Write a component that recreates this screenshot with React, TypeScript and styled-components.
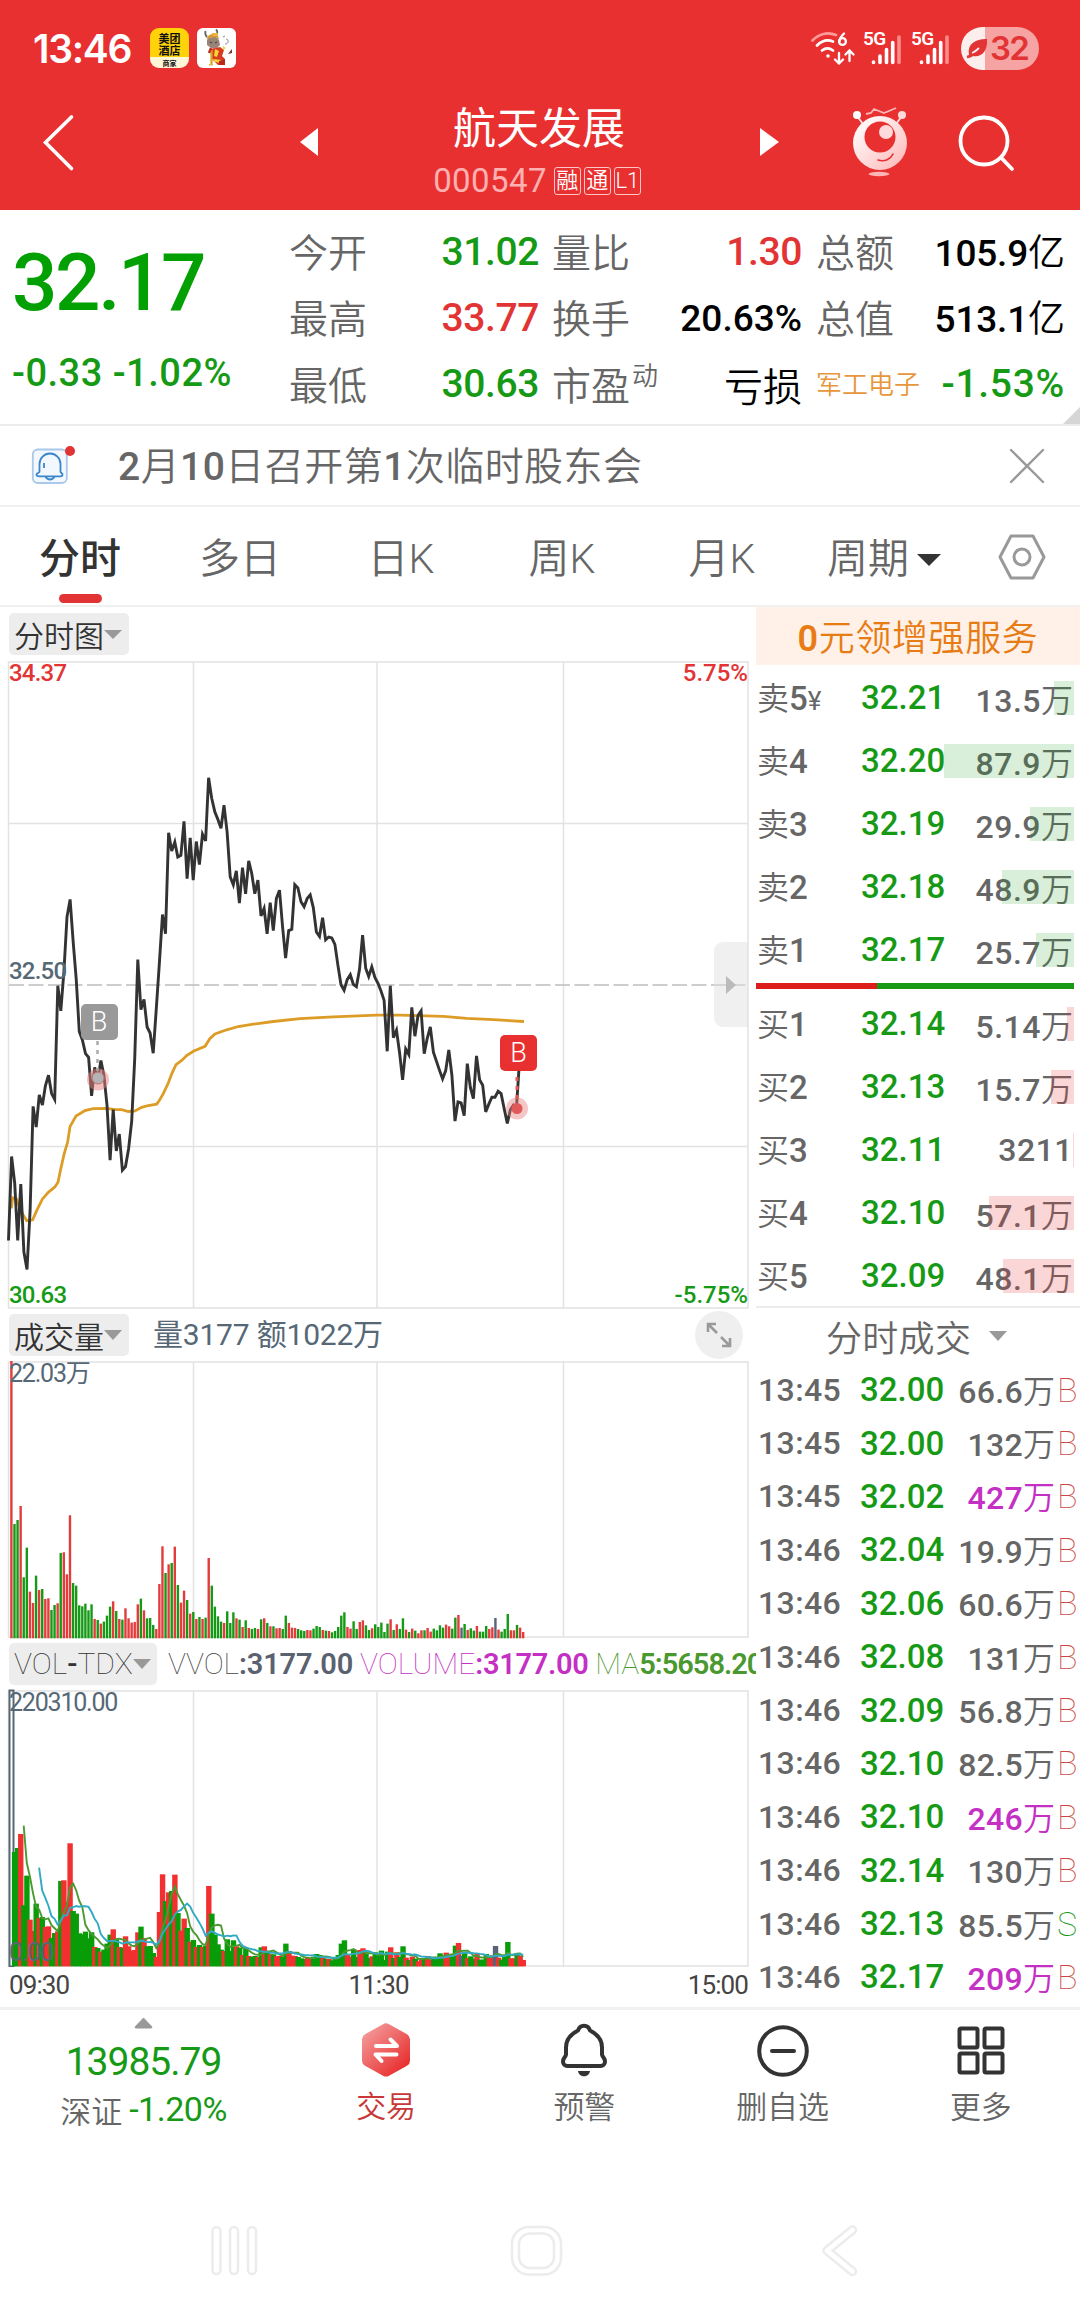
import React from "react";
import styled, { createGlobalStyle } from "styled-components";

const RED = "#e83030";
const UP = "#e23434";
const DOWN = "#169a16";
const SLATE = "#566876";
const GREY = "#666666";
const MAGENTA = "#c42fc4";
const LINE = "#e2e2e2";

const GlobalStyle = createGlobalStyle`
  * { box-sizing: border-box; }
  body {
    margin: 0;
    background: #fff;
    font-family: Roboto, "Noto Sans CJK SC", sans-serif;
    -webkit-font-smoothing: antialiased;
  }
`;

/* ---------- shared pieces ---------- */

const Screen = styled.div`
  width: 1080px;
  height: 2316px;
  overflow: hidden;
  display: flex;
  flex-direction: column;
  background: #fff;
`;

const Num = styled.span<{ $size: number; $color?: string; $weight?: number; $gap?: number }>`
  font-size: ${(p) => p.$size}px;
  color: ${(p) => p.$color ?? "inherit"};
  font-weight: ${(p) => p.$weight ?? 500};
  letter-spacing: ${(p) => p.$gap ?? 0}px;
  line-height: 1;
  white-space: pre;
`;

const Han = styled.span<{ $size: number; $color?: string; $weight?: number; $gap?: number }>`
  font-family: "Noto Sans CJK SC", sans-serif;
  font-size: ${(p) => p.$size}px;
  color: ${(p) => p.$color ?? "inherit"};
  font-weight: ${(p) => p.$weight ?? 350};
  letter-spacing: ${(p) => p.$gap ?? 0}px;
  line-height: 1;
  white-space: pre;
`;

const Unit = styled.span`
  font-family: "Noto Sans CJK SC", sans-serif;
  font-weight: 350;
  letter-spacing: 0;
`;

/* Digits keep the medium weight, a trailing unit such as 万 or 亿 is set lighter. */
const Amount = ({ children }: { children: string }) => {
  const unit = /[万亿]$/.test(children) ? children.slice(-1) : "";
  return (
    <>
      {unit ? children.slice(0, -1) : children}
      {unit && <Unit>{unit}</Unit>}
    </>
  );
};

/* ---------- header ---------- */

const Header = styled.header`
  height: 210px;
  background: ${RED};
  color: #fff;
  display: flex;
  flex-direction: column;
`;

const StatusBar = styled.div`
  height: 96px;
  padding: 0 41px 0 33px;
  display: flex;
  justify-content: space-between;
  align-items: center;
`;

const StatusGroup = styled.div`
  display: flex;
  align-items: center;
`;

const Clock = styled.span`
  font-family: Inter, sans-serif;
  font-size: 39px;
  font-weight: 600;
  letter-spacing: -1.3px;
  line-height: 1;
  width: 117px;
`;

const HotelBadge = styled.div`
  width: 39px;
  height: 40px;
  margin-right: 8px;
  border-radius: 9px;
  overflow: hidden;
  background: linear-gradient(#ffd20a 0 72%, #fff6d8 72%);
  color: #111;
  display: flex;
  flex-direction: column;
  align-items: center;
  font-family: "Noto Sans CJK SC", sans-serif;
  font-weight: 700;
  font-size: 11px;
  line-height: 12px;
  padding-top: 4px;
`;

const HotelFoot = styled.span`
  font-size: 7px;
  line-height: 10px;
  margin-top: 2px;
`;

const MascotBadge = styled.div`
  width: 39px;
  height: 40px;
  border-radius: 6px;
  background: #fff;
`;

const SignalWrap = styled.div`
  display: flex;
  gap: 9px;
  margin: 0 11px 0 8px;
`;

const Battery = styled.div`
  width: 78px;
  height: 43px;
  border-radius: 22px;
  background: linear-gradient(90deg, #fdeeee 0 24px, #f6a3a3 24px);
  color: ${UP};
  display: flex;
  align-items: center;
  padding-left: 5px;
  font-family: Inter, sans-serif;
  font-weight: 600;
  font-size: 33px;
  letter-spacing: -1.8px;
`;

const TitleBar = styled.div`
  flex: 1;
  display: grid;
  grid-template-columns: 300px 18px 442px 19px 73px 55px 51px 60px;
  align-items: start;
`;

const Cell = styled.div<{ $top: number; $left?: number }>`
  padding-top: ${(p) => p.$top}px;
  padding-left: ${(p) => p.$left ?? 0}px;
  line-height: 0;
`;

const TitleBlock = styled.div`
  display: flex;
  flex-direction: column;
  align-items: center;
  padding-top: 8px;
`;

const CodeRow = styled.div`
  margin-top: 17px;
  display: flex;
  align-items: center;
  gap: 3px;
  padding-right: 4px;
`;

const Code = styled.span`
  font-size: 33px;
  line-height: 1;
  color: #ffb0b0;
  letter-spacing: 0.4px;
  margin-right: 4px;
`;

const Tag = styled.span`
  width: 27px;
  height: 28px;
  border: 1px solid #ffc4c4;
  border-radius: 3px;
  display: flex;
  align-items: center;
  justify-content: center;
  font-family: Roboto, "Noto Sans CJK SC", sans-serif;
  font-size: 22px;
  font-weight: 350;
  line-height: 1;
`;

/* ---------- quote ---------- */

const Quote = styled.section`
  position: relative;
  height: 216px;
  border-bottom: 2px solid #ececec;
  display: flex;
`;

const PriceBlock = styled.div`
  width: 289px;
  padding: 33px 0 0 12px;
  display: flex;
  flex-direction: column;
  gap: 31px;
`;

const StatGrid = styled.div`
  display: grid;
  grid-template-columns: 250px 13px 250px 14px 249px;
  grid-template-rows: repeat(3, 66.3px);
  padding-top: 9px;
`;

const Stat = styled.div<{ $col: number; $row: number }>`
  grid-column: ${(p) => p.$col};
  grid-row: ${(p) => p.$row};
  display: flex;
  align-items: center;
  justify-content: space-between;
`;

const StatLabel = styled.span<{ $small?: boolean }>`
  font-family: "Noto Sans CJK SC", sans-serif;
  font-size: ${(p) => (p.$small ? 26 : 39)}px;
  color: ${(p) => (p.$small ? "#e8963c" : GREY)};
  font-weight: 350;
  line-height: 1;
  margin-bottom: 3px;
  white-space: nowrap;
  sup {
    font-size: 26px;
    line-height: 0;
    vertical-align: 15px;
    margin-left: 2px;
  }
`;

const Corner = styled.i`
  position: absolute;
  right: 0;
  bottom: 0;
  border-style: solid;
  border-width: 0 0 17px 17px;
  border-color: transparent transparent #d6d6d6 transparent;
`;

/* ---------- notice and tabs ---------- */

const Notice = styled.section`
  height: 81px;
  border-bottom: 2px solid #f1f1f1;
  display: flex;
  align-items: center;
  padding: 0 35px 0 31px;
`;

const NoticeText = styled.span`
  flex: 1;
  margin-left: 41px;
  padding-top: 3px;
  font-size: 39px;
  font-weight: 350;
  letter-spacing: 0.45px;
  color: ${GREY};
  line-height: 1;
  b { font-weight: 500; }
`;

const Tabs = styled.nav`
  height: 100px;
  border-bottom: 2px solid #f1f1f1;
  display: grid;
  grid-template-columns: 160px 160px 162px 160px 160px 164px 114px;
  color: ${GREY};
`;

const Tab = styled.div<{ $active?: boolean }>`
  display: flex;
  flex-direction: column;
  align-items: center;
  padding-top: 32px;
  font-size: 41px;
  line-height: 1;
  font-weight: ${(p) => (p.$active ? 500 : 350)};
  color: ${(p) => (p.$active ? "#333" : GREY)};
  &::after {
    content: "";
    width: 43px;
    height: 9px;
    border-radius: 5px;
    margin-top: 14px;
    background: ${(p) => (p.$active ? UP : "transparent")};
  }
`;

const TabInner = styled.span`
  display: flex;
  align-items: center;
  gap: 8px;
`;

const Caret = styled.i<{ $w: number; $h: number; $color: string }>`
  display: block;
  flex: none;
  border-style: solid;
  border-width: ${(p) => p.$h}px ${(p) => p.$w / 2}px 0;
  border-color: ${(p) => p.$color} transparent transparent;
`;

/* ---------- main ---------- */

const Main = styled.main`
  height: 1400px;
  display: flex;
`;

const Left = styled.div`
  width: 756px;
  display: flex;
  flex-direction: column;
  overflow: hidden;
`;

const PaneHead = styled.div<{ $h: number }>`
  height: ${(p) => p.$h}px;
  padding-left: 9px;
  display: flex;
  align-items: center;
  white-space: nowrap;
`;

const Pill = styled.div<{ $w: number }>`
  flex: none;
  width: ${(p) => p.$w}px;
  height: 42px;
  border-radius: 5px;
  background: #ededed;
  color: #333;
  display: flex;
  align-items: center;
  padding-left: 5px;
`;

const Pane = styled.div<{ $h: number }>`
  position: relative;
  height: ${(p) => p.$h}px;
`;

const Plot = styled.svg`
  display: block;
`;

const PlotLabel = styled.span<{ $top: number; $color: string; $right?: boolean; $light?: boolean }>`
  position: absolute;
  top: ${(p) => p.$top}px;
  ${(p) => (p.$right ? "right: 8px;" : "left: 9px;")}
  color: ${(p) => p.$color};
  font-size: ${(p) => (p.$light ? 25 : 24)}px;
  font-weight: ${(p) => (p.$light ? 400 : 500)};
  letter-spacing: ${(p) => (p.$light ? -1.2 : p.$right ? 0 : -0.8)}px;
  line-height: 1;
`;

const Flag = styled.span<{ $x: number; $y: number; $bg: string }>`
  position: absolute;
  left: ${(p) => p.$x}px;
  top: ${(p) => p.$y}px;
  width: 37px;
  height: 36px;
  border-radius: 5px;
  background: ${(p) => p.$bg};
  color: #fff;
  font-size: 27px;
  font-weight: 300;
  line-height: 36px;
  text-align: center;
`;

const Drawer = styled.div`
  position: absolute;
  right: 8px;
  top: 281px;
  width: 34px;
  height: 85px;
  border-radius: 9px 0 0 9px;
  background: rgba(225, 225, 225, 0.5);
  display: flex;
  align-items: center;
  justify-content: center;
`;

const Expand = styled.div`
  width: 48px;
  height: 48px;
  border-radius: 50%;
  background: #efefef;
  margin-left: auto;
  margin-right: 13px;
  display: flex;
  align-items: center;
  justify-content: center;
`;

const TimeAxis = styled.div`
  flex: 1;
  padding: 5px 8px 0 9px;
  display: flex;
  justify-content: space-between;
  font-size: 26px;
  line-height: 1;
  color: #444;
  letter-spacing: -0.9px;
`;

const Right = styled.aside`
  width: 324px;
`;

const Promo = styled.div`
  height: 58px;
  padding-top: 5px;
  background: #fff1e7;
  color: #e87c14;
  display: flex;
  align-items: center;
  justify-content: center;
  font-size: 36px;
  font-weight: 350;
  letter-spacing: 0.6px;
  line-height: 1;
  b { font-weight: 600; }
`;

const BookRow = styled.div`
  height: 63px;
  display: grid;
  grid-template-columns: 104px 84px 130px;
  align-items: center;
  padding-left: 1px;
  color: ${GREY};
  font-size: 33px;
  line-height: 1;
`;

const BookName = styled.span`
  font-weight: 500;
  white-space: nowrap;
  small { font-size: 26px; font-weight: 400; }
`;

const NameHan = styled.span`
  font-family: "Noto Sans CJK SC", sans-serif;
  font-weight: 350;
  font-size: 32px;
`;

const Qty = styled.div`
  position: relative;
  text-align: right;
  height: 34px;
  line-height: 34px;
  padding-right: 2px;
  font-size: 32px;
  font-weight: 500;
  letter-spacing: 0.5px;
  white-space: nowrap;
`;

const DepthBar = styled.i<{ $sell?: boolean }>`
  position: absolute;
  right: 1px;
  top: 0;
  height: 34px;
  background: ${(p) => (p.$sell ? "rgba(22,154,22,0.16)" : "rgba(232,48,48,0.2)")};
`;

const Ratio = styled.div`
  width: 318px;
  height: 6px;
  margin: 1px 0 3px;
  background: linear-gradient(90deg, #dd1c1c 0 38%, #169a16 38%);
`;

const Sells = styled.div`
  height: 317px;
  padding-top: 1px;
`;

const Buys = styled.div`
  height: 314px;
`;

const TicksTitle = styled.div`
  height: 56px;
  border-top: 2px solid #ececec;
  display: flex;
  align-items: center;
  padding: 2px 0 0 70px;
  gap: 18px;
  color: ${GREY};
`;

const Ticks = styled.div`
  padding-top: 1px;
`;

const TickRow = styled.div`
  height: 53.4px;
  display: grid;
  grid-template-columns: 102px 85px 110px 22px;
  align-items: center;
  padding-left: 2px;
  color: ${GREY};
  line-height: 1;
  & > :nth-child(3) { text-align: right; padding-top: 1px; }
`;

const Side = styled.span<{ $buy: boolean }>`
  font-size: 34px;
  font-weight: 100;
  margin-left: 2px;
  color: ${(p) => (p.$buy ? "#c84848" : DOWN)};
`;

/* ---------- footer ---------- */

const Footer = styled.footer`
  height: 176px;
  border-top: 3px solid #f1f1f1;
  display: grid;
  grid-template-columns: 287px repeat(4, 198.25px);
`;

const IndexBox = styled.div`
  display: flex;
  flex-direction: column;
  align-items: center;
  padding-top: 7px;
`;

const IndexLine = styled.div`
  margin-top: 10px;
  display: flex;
  align-items: center;
  gap: 7px;
`;

const Action = styled.div`
  display: flex;
  flex-direction: column;
  align-items: center;
  padding-top: 12px;
  gap: 11px;
`;

const NavBar = styled.div`
  height: 133px;
  display: flex;
  padding: 42px 0 0 210px;
`;

const NavSlot = styled.div<{ $w: number }>`
  width: ${(p) => p.$w}px;
`;

/* ---------- data ---------- */

type Bar = [number, "r" | "g" | "n"];

const VOLUMES =
  "833r 343g 355g 397r 183g 272g 140r 106r 188g 145r 148g 118r 120r 85g 100g 105r 256g 258r 192r 369r " +
  "166g 158g 99g 96g 104g 84g 102g 58r 55g 44r 50g 68g 95g 111r 82g 58r 56g 90r 60r 47r " +
  "49r 102r 119g 84r 60g 61g 40g 28r 163r 276r 196g 222r 226g 275r 160g 107r 143r 115g 74r 79g " +
  "58r 64g 58r 62g 241r 158g 95g 66g 50g 46r 81g 46g 78g 60r 56g 34r 54g 31r 28g 31g " +
  "28r 57g 60r 46g 36r 36g 30r 31r 28g 68g 46r 32r 31r 28g 24g 22g 25r 24r 29g 37g " +
  "34g 25r 23g 22r 18g 22g 34g 68g 78g 34r 29r 51g 28g 49r 54r 39g 25g 30r 42g 34g " +
  "47g 19g 44g 57r 25g 42r 28g 60g 26r 19g 29r 23g 15r 24r 24g 31r 20r 29g 24g 39g " +
  "32g 41r 36r 29g 62g 70r 32n 43g 25r 30g 23g 37r 20g 20g 37g 28r 33r 61n 26r 20g " +
  "28g 73g 24r 24r 40g 32r 19r";

const BARS: Bar[] = VOLUMES.split(" ").map((s) => [parseInt(s, 10) / 3, s.slice(-1) as Bar[1]]);

const PRICES = [
  1395, 1212, 1270, 1395, 1272, 1420, 1458, 1330, 1103, 1148, 1078, 1100, 1058, 1035, 1075, 1088, 840, 895, 810, 690,
  652, 745, 825, 940, 958, 988, 996, 1080, 1018, 1045, 1003, 1035, 1100, 1220, 1110, 1200, 1163, 1242, 1234, 1195,
  1135, 1000, 783, 892, 870, 930, 943, 987, 890, 790, 685, 727, 507, 547, 527, 560, 556, 482, 607, 518,
  610, 526, 576, 510, 525, 387, 432, 461, 478, 497, 447, 505, 603, 620, 590, 660, 583, 640, 568, 595,
  640, 610, 688, 672, 727, 659, 720, 650, 632, 710, 780, 720, 717, 620, 627, 657, 668, 650, 642, 670,
  723, 733, 692, 740, 734, 736, 750, 797, 838, 850, 827, 816, 837, 842, 805, 730, 802, 820, 799, 822,
  835, 852, 872, 983, 840, 953, 937, 985, 1045, 978, 990, 887, 950, 905, 895, 988, 955, 930, 985, 1005,
  1025, 1043, 1025, 980, 1035, 1135, 1093, 1095, 1123, 1010, 1062, 1086, 993, 1045, 1057, 1115, 1098, 1083, 1083, 1070,
  1075, 1108, 1140, 1110, 1100, 1105, 1000,
];

const AVERAGE: [number, number][] = [
  [34, 1325], [38, 1302], [50, 1305], [60, 1325], [70, 1340], [80, 1352], [98, 1350], [110, 1330], [127, 1305],
  [145, 1290], [165, 1278], [174, 1268], [182, 1240], [193, 1205], [203, 1180], [210, 1147], [228, 1124], [255, 1112],
  [280, 1108], [320, 1107], [345, 1110], [365, 1110], [385, 1114], [405, 1113], [425, 1105], [445, 1101], [470, 1098],
  [478, 1090], [490, 1075], [505, 1052], [515, 1032], [528, 1012], [545, 1003], [560, 992], [580, 983], [615, 972],
  [630, 955], [645, 945], [680, 936], [715, 929], [760, 924], [820, 918], [900, 912], [1000, 908], [1130, 904],
  [1200, 904], [1330, 907], [1400, 911], [1480, 914], [1572, 918],
];

const STEP = 3.079;
const X0 = 8.5;
const priceY = (v: number) => v / 2.178 - 61;

const pricePath = PRICES.map((v, i) => `${(X0 + i * STEP).toFixed(1)},${priceY(v).toFixed(1)}`).join(" ");
const avgPath = AVERAGE.map(([x, y]) => `${(x / 3).toFixed(1)},${priceY(y).toFixed(1)}`).join(" ");

const barX = (i: number) => 11.4 + i * 3.083;

const movingAverage = (n: number, base: number) =>
  BARS.map((_, i) => {
    if (i < n - 1) return "";
    const sum = BARS.slice(i - n + 1, i + 1).reduce((a, b) => a + b[0], 0);
    return `${barX(i).toFixed(1)},${(base - sum / n).toFixed(1)}`;
  })
    .filter(Boolean)
    .join(" ");

const SELLS: [string, string, string, number][] = [
  ["卖5", "32.21", "13.5万", 20],
  ["卖4", "32.20", "87.9万", 130],
  ["卖3", "32.19", "29.9万", 44],
  ["卖2", "32.18", "48.9万", 72],
  ["卖1", "32.17", "25.7万", 38],
];

const BUYS: [string, string, string, number][] = [
  ["买1", "32.14", "5.14万", 7],
  ["买2", "32.13", "15.7万", 23],
  ["买3", "32.11", "3211", 1],
  ["买4", "32.10", "57.1万", 85],
  ["买5", "32.09", "48.1万", 71],
];

const TICKS: [string, string, string, string][] = [
  ["13:45", "32.00", "66.6万", "B"],
  ["13:45", "32.00", "132万", "B"],
  ["13:45", "32.02", "427万", "B"],
  ["13:46", "32.04", "19.9万", "B"],
  ["13:46", "32.06", "60.6万", "B"],
  ["13:46", "32.08", "131万", "B"],
  ["13:46", "32.09", "56.8万", "B"],
  ["13:46", "32.10", "82.5万", "B"],
  ["13:46", "32.10", "246万", "B"],
  ["13:46", "32.14", "130万", "B"],
  ["13:46", "32.13", "85.5万", "S"],
  ["13:46", "32.17", "209万", "B"],
];

const isLarge = (q: string) => !q.includes(".") && parseInt(q, 10) > 200;

/* ---------- icons ---------- */

const WifiIcon = () => (
  <svg width="44" height="34" viewBox="0 0 44 34" fill="none" stroke="#fff" strokeWidth="2.8" strokeLinecap="round">
    <path d="M1.5 9.5C8 2.5 17 1 25 4" stroke="#ff9a9a" />
    <path d="M6 14.5c5-5 11-6 16-4M11 19.5c4-3 7-3 11 0" />
    <circle cx="17" cy="25" r="1.1" fill="#fff" strokeWidth="1.4" />
    <path d="M33 2.5c-3 3-4.500 5.500-4.500 7.500" strokeWidth="2.4" />
    <circle cx="31.500" cy="10.500" r="3.400" strokeWidth="2.4" />
    <path d="M28 22v10m-4-3.500 4 4 4-4M38.500 30V20m-4 3.500 4-4 4 4" strokeWidth="2.3" />
  </svg>
);

const SignalText = styled.span`
  position: absolute;
  left: 0;
  top: -2px;
  font-size: 19px;
  font-weight: 600;
  letter-spacing: -0.5px;
  line-height: 1;
`;

const SignalBox = styled.div`
  position: relative;
  width: 39px;
  height: 34px;
`;

const Signal = () => (
  <SignalBox>
    <SignalText>5G</SignalText>
    <svg width="39" height="34" viewBox="0 0 39 34" strokeWidth="3.6" strokeLinecap="round" stroke="#fff">
      <path d="M10.500 31v.5M17 25v6.500M23.500 18.500v13M29.700 11.500v20" />
      <path d="M36 6v25.500" stroke="#ff8b8b" />
    </svg>
  </SignalBox>
);

const OxIcon = () => (
  <svg width="39" height="40" viewBox="0 0 39 40">
    <path d="M10 9C8 7 8 5 8.500 3M19 7c2-2 1.500-4 0-5.500" stroke="#666" strokeWidth="1.800" fill="none" />
    <path d="M10 12c2-4 8-5 12 0l1 5-4 4-5-1-4-3z" fill="#9a8478" />
    <path d="M9.500 11c2-6 10-7 13 0l-5-2z" fill="#d79a35" />
    <path d="M15 5h6v3h-5z" fill="#e8b43c" />
    <path d="M14 21l9-2 4 3-2 6 3 3v5l-7 1-6-6z" fill="#d93a22" />
    <path d="M18 21l4 2-2 6-3-1zM16 31l9 1-1 3-6-1zM26 18l3 2-3 2z" fill="#f7d230" />
    <path d="M14.500 22v14" stroke="#d7a420" strokeWidth="2.200" />
    <path d="M12 36h4v1.500h-4z" fill="#e8b43c" />
    <path d="M14 20l-2 5" stroke="#c03020" strokeWidth="2.500" />
    <path d="M31 26l4-5v4z" fill="#7a3028" />
    <path d="M22 33l6-2v6h-6z" fill="#b82a20" />
    <path d="M26 9l2-1M28 16c4 0 4-5 1-5" fill="none" stroke="#888" strokeWidth="1" />
    <path d="M13 14l2 1M18 15l2-1" stroke="#444" strokeWidth="1.200" />
  </svg>
);

const RobotIcon = () => (
  <svg width="56" height="70" viewBox="0 0 56 70">
    <defs>
      <linearGradient id="robot" x1="0" y1="0" x2="1" y2="1">
        <stop offset="0.200" stopColor="#fff5f5" />
        <stop offset="1" stopColor="#ffb5b5" />
      </linearGradient>
    </defs>
    <path d="M5 9l6 8M50 9l-6 8" stroke="#ffdcdc" strokeWidth="2" />
    <circle cx="5" cy="8" r="4" fill="#fff" />
    <circle cx="50" cy="8" r="4" fill="#ffdcdc" />
    <path d="M14 7l5-1 3-4 10 4 12-5" fill="none" stroke="#ffb5b5" strokeWidth="1.800" />
    <circle cx="28" cy="36" r="27" fill="url(#robot)" />
    <circle cx="28" cy="30" r="15.500" fill={RED} />
    <circle cx="34" cy="25" r="7" fill="#ffdada" />
    <path d="M26 53c6 2 12 0 15-6" fill="none" stroke={RED} strokeWidth="1.600" strokeLinecap="round" />
    <ellipse cx="27" cy="67" rx="10.500" ry="2.200" fill="#ffb5b5" />
  </svg>
);

const NoticeBell = () => (
  <svg width="46" height="44" viewBox="0 0 46 44" fill="none" stroke="#3a86cc" strokeWidth="1.800">
    <rect x="1.800" y="5.500" width="34" height="33.500" rx="5" stroke="#a9c8ea" fill="#f3f8fe" />
    <path d="M8.500 27.500V20a10.500 10.500 0 0 1 21 0v7.500c0 1.500 2 1.500 2 3s-1 1.800-2 1.800h-21c-1 0-3-.3-3-1.800s3-1.500 3-3z" />
    <path d="M14.500 32.500c2 4 7 4 9 0" />
    <path d="M13 19v5" />
    <circle cx="39" cy="7" r="5" fill={UP} stroke="none" />
  </svg>
);

const TradeIcon = () => (
  <svg width="50" height="56" viewBox="0 0 50 56">
    <defs>
      <linearGradient id="trade" x1="0.100" y1="0.100" x2="0.800" y2="0.900">
        <stop offset="0" stopColor="#f49a9a" />
        <stop offset="1" stopColor={RED} />
      </linearGradient>
    </defs>
    <path d="M22 2.200q3-1.700 6 0l18 10q3 1.800 3 5v21.500q0 3.200-3 5l-18 10q-3 1.700-6 0l-18-10q-3-1.800-3-5V17.200q0-3.200 3-5z" fill="url(#trade)" />
    <path d="M15 24h21l-6.500-6.500M35.500 32.500h-21l6 6.500" fill="none" stroke="#fff" strokeWidth="4" strokeLinecap="round" strokeLinejoin="round" />
  </svg>
);

const BellIcon = () => (
  <svg width="50" height="56" viewBox="0 0 50 56" fill="none" stroke="#333" strokeWidth="4" strokeLinejoin="round">
    <path d="M19 8.500c2-6.500 10-6.500 12 0 8 4 12 10 12 17v7c0 2 3 3.500 3 7 0 3-2 4.500-4.500 4.500h-33C6 44 4 42.500 4 39.500c0-3.500 3-5 3-7v-7c0-7 4-13 12-17z" />
    <path d="M19 49h12c-1 7-11 7-12 0z" fill="#333" stroke="none" />
  </svg>
);

const MinusIcon = () => (
  <svg width="54" height="56" viewBox="0 0 54 56" fill="none" stroke="#333" strokeWidth="4" strokeLinecap="round">
    <circle cx="27" cy="29" r="23.800" />
    <path d="M16 29h22" />
  </svg>
);

const MoreIcon = () => (
  <svg width="50" height="56" viewBox="0 0 50 56" fill="none" stroke="#333" strokeWidth="4">
    <rect x="3.500" y="6.500" width="18" height="19" rx="1.500" />
    <rect x="28.500" y="6.500" width="18" height="19" rx="1.500" />
    <rect x="3.500" y="31.500" width="18" height="19" rx="1.500" />
    <rect x="28.500" y="31.500" width="18" height="19" rx="1.500" />
  </svg>
);

/* ---------- plots ---------- */

const Grid = ({ top, bottom }: { top: number; bottom: number }) => (
  <g stroke={LINE} strokeWidth="1.500" fill="none">
    <rect x="8.500" y={top} width="739.500" height={bottom - top} />
    <path d={`M193.500 ${top}V${bottom}M377 ${top}V${bottom}M563.500 ${top}V${bottom}`} />
  </g>
);

const barFill = { r: "#e23c3c", g: "#169a16", n: "#5a6478" };

const PricePlot = () => (
  <Plot width="756" height="648">
    <Grid top={1} bottom={647} />
    <path d="M9 162.500H748M9 485.500H748" stroke={LINE} strokeWidth="1.500" />
    <path d="M9 324H748" stroke="#bdbdbd" strokeWidth="1.500" strokeDasharray="15 4.500" />
    <polyline points={avgPath} fill="none" stroke="#dc9c26" strokeWidth="2.800" />
    <polyline points={pricePath} fill="none" stroke="#333" strokeWidth="2.900" />
    <ellipse cx="98" cy="418.500" rx="11" ry="11" fill="#e88080" opacity=".5" />
    <circle cx="98" cy="417" r="6" fill="#b4b4b4" stroke="#c07070" strokeWidth="1" />
    <path d="M97.500 380v30" stroke="#aaa" strokeWidth="2.500" strokeDasharray="4 5" />
    <circle cx="517" cy="447.500" r="11" fill="#e88080" opacity=".45" />
    <circle cx="517" cy="447.500" r="5.500" fill="#e05858" />
    <path d="M517 416v28" stroke="#e05858" strokeWidth="3" strokeDasharray="4 5" />
  </Plot>
);

const VolumePlot = () => (
  <Plot width="756" height="278">
    <Grid top={1} bottom={276} />
    {BARS.map(([h, c], i) => (
      <rect key={i} x={barX(i) - 1.2} y={277.300 - h} width="2.400" height={h} fill={barFill[c]} />
    ))}
  </Plot>
);

const TdxPlot = () => (
  <Plot width="756" height="278">
    <Grid top={2} bottom={277} />
    {BARS.map(([h, c], i) =>
      i === 0 ? (
        <rect key={i} x="9.500" y="1.500" width="4" height="276" fill="#fff" stroke="#566876" strokeWidth="2" />
      ) : (
        <rect key={i} x={barX(i) - 2.600} y={277.300 - h} width="5.400" height={h} fill={c === "r" ? "#f23030" : c === "g" ? "#089c08" : "#5a6478"} />
      ),
    )}
    <polyline points={movingAverage(5, 277.3)} fill="none" stroke="#4a9a30" strokeWidth="1.900" />
    <polyline points={movingAverage(10, 277.3)} fill="none" stroke="#32aac4" strokeWidth="1.900" />
  </Plot>
);

const Book = ({ rows, sell }: { rows: typeof SELLS; sell?: boolean }) => (
  <>
    {rows.map(([name, price, qty, w]) => (
      <BookRow key={name}>
        <BookName>
          <NameHan>{name[0]}</NameHan>
          {name[1]}
          {name === "卖5" && <small>¥</small>}
        </BookName>
        <Num $size={33} $color={DOWN} $gap={0}>{price}</Num>
        <Qty>
          <Amount>{qty}</Amount>
          <DepthBar $sell={sell} style={{ width: w }} />
        </Qty>
      </BookRow>
    ))}
  </>
);

export default function App() {
  return (
    <Screen>
      <GlobalStyle />
      <Header>
        <StatusBar>
          <StatusGroup>
            <Clock>13:46</Clock>
            <HotelBadge>
              <span>美团</span>
              <span>酒店</span>
              <HotelFoot>商家</HotelFoot>
            </HotelBadge>
            <MascotBadge><OxIcon /></MascotBadge>
          </StatusGroup>
          <StatusGroup>
            <WifiIcon />
            <SignalWrap>
              <Signal />
              <Signal />
            </SignalWrap>
            <Battery>
              <svg width="24" height="24" viewBox="0 0 24 24">
                <path d="M3 19C1 8 9 3 21 3c1 12-6 19-14 17z" fill={UP} />
                <path d="M1 21c5-1 8-3 12-7" stroke={UP} strokeWidth="2.500" fill="none" />
                <path d="M6 17c3-1 5-3 7-5" stroke="#fdeeee" strokeWidth="1.800" />
              </svg>
              32
            </Battery>
          </StatusGroup>
        </StatusBar>
        <TitleBar>
          <Cell $top={18} $left={42}>
            <svg width="34" height="58" viewBox="0 0 34 58" fill="none" stroke="#fff" strokeWidth="3.600" strokeLinecap="round">
              <path d="M29.500 3 3.500 28.500l26 26" />
            </svg>
          </Cell>
          <Cell $top={32}>
            <svg width="18" height="28"><path d="M18 0v28L0 14z" fill="#fff" /></svg>
          </Cell>
          <TitleBlock>
            <Han $size={43} $weight={400}>航天发展</Han>
            <CodeRow>
              <Code>000547</Code>
              <Tag>融</Tag>
              <Tag>通</Tag>
              <Tag>L1</Tag>
            </CodeRow>
          </TitleBlock>
          <Cell $top={32}>
            <svg width="19" height="28"><path d="M0 0v28l19-14z" fill="#fff" /></svg>
          </Cell>
          <span />
          <Cell $top={11}><RobotIcon /></Cell>
          <span />
          <Cell $top={18}>
            <svg width="58" height="60" viewBox="0 0 58 60" fill="none" stroke="#fff" strokeWidth="3.800" strokeLinecap="round">
              <circle cx="26" cy="27" r="23.500" />
              <path d="M43 43.500 54 55" />
            </svg>
          </Cell>
        </TitleBar>
      </Header>

      <Quote>
        <PriceBlock>
          <Num $size={80} $color="#02a002" $gap={-2.4}>32.17</Num>
          <Num $size={38} $color={DOWN} $gap={0.5}>-0.33 -1.02%</Num>
        </PriceBlock>
        <StatGrid>
          <Stat $col={1} $row={1}><StatLabel>今开</StatLabel><Num $size={39} $color={DOWN} $gap={-0.4}>31.02</Num></Stat>
          <Stat $col={1} $row={2}><StatLabel>最高</StatLabel><Num $size={39} $color={UP} $gap={-0.4}>33.77</Num></Stat>
          <Stat $col={1} $row={3}><StatLabel>最低</StatLabel><Num $size={39} $color={DOWN} $gap={-0.4}>30.63</Num></Stat>
          <Stat $col={3} $row={1}><StatLabel>量比</StatLabel><Num $size={39} $color={UP} $gap={-0.4}>1.30</Num></Stat>
          <Stat $col={3} $row={2}><StatLabel>换手</StatLabel><Num $size={37} $color="#000">20.63%</Num></Stat>
          <Stat $col={3} $row={3}><StatLabel>市盈<sup>动</sup></StatLabel><Han $size={39} $color="#000">亏损</Han></Stat>
          <Stat $col={5} $row={1}><StatLabel>总额</StatLabel><Num $size={37} $color="#000" $gap={-0.2}><Amount>105.9亿</Amount></Num></Stat>
          <Stat $col={5} $row={2}><StatLabel>总值</StatLabel><Num $size={37} $color="#000" $gap={-0.2}><Amount>513.1亿</Amount></Num></Stat>
          <Stat $col={5} $row={3}><StatLabel $small>军工电子</StatLabel><Num $size={39} $color={DOWN} $gap={0.7}>-1.53%</Num></Stat>
        </StatGrid>
        <Corner />
      </Quote>

      <Notice>
        <NoticeBell />
        <NoticeText><b>2</b>月<b>10</b>日召开第<b>1</b>次临时股东会</NoticeText>
        <svg width="36" height="36" stroke="#999" strokeWidth="2.400" strokeLinecap="round"><path d="M2 2l32 32M34 2 2 34" /></svg>
      </Notice>

      <Tabs>
        <Tab $active>分时</Tab>
        <Tab>多日</Tab>
        <Tab>日K</Tab>
        <Tab>周K</Tab>
        <Tab>月K</Tab>
        <Tab><TabInner>周期<Caret $w={24} $h={12} $color="#333" /></TabInner></Tab>
        <Cell $top={27} $left={32}>
          <svg width="48" height="46" viewBox="0 0 48 46" fill="none" stroke="#999" strokeWidth="3" strokeLinejoin="round">
            <path d="M13 2h22l11 21-11 21H13L2 23z" />
            <circle cx="24" cy="23" r="8" />
          </svg>
        </Cell>
      </Tabs>

      <Main>
        <Left>
          <PaneHead $h={54}>
            <Pill $w={120}><Han $size={30}>分时图</Han><Caret $w={18} $h={9} $color="#999" /></Pill>
          </PaneHead>
          <Pane $h={648}>
            <PricePlot />
            <PlotLabel $top={0} $color={UP}>34.37</PlotLabel>
            <PlotLabel $top={0} $color={UP} $right>5.75%</PlotLabel>
            <PlotLabel $top={298} $color={SLATE}>32.50</PlotLabel>
            <PlotLabel $top={622} $color={DOWN}>30.63</PlotLabel>
            <PlotLabel $top={622} $color={DOWN} $right>-5.75%</PlotLabel>
            <Flag $x={80.5} $y={343} $bg="#999">B</Flag>
            <Flag $x={500} $y={374} $bg={RED}>B</Flag>
            <Drawer><svg width="10" height="18"><path d="M0 0v18l10-9z" fill="#bbb" /></svg></Drawer>
          </Pane>
          <PaneHead $h={52}>
            <Pill $w={120}><Han $size={30}>成交量</Han><Caret $w={18} $h={10} $color="#999" /></Pill>
            <Num $size={30} $color={SLATE} $weight={400} $gap={-0.2} style={{ marginLeft: 24 }}>量3177 额1022万</Num>
            <Expand>
              <svg width="26" height="26" viewBox="0 0 26 26" fill="none" stroke="#999" strokeWidth="2.600">
                <path d="M2 10V2h8M2 2l9 9M24 16v8h-8M24 24l-9-9" />
              </svg>
            </Expand>
          </PaneHead>
          <Pane $h={278}>
            <VolumePlot />
            <PlotLabel $top={0} $color={SLATE} $light>22.03万</PlotLabel>
          </Pane>
          <PaneHead $h={50}>
            <Pill $w={148}>
              <Num $size={30} $weight={100}>VOL</Num><Num $size={30}>-</Num><Num $size={30} $weight={100}>TDX</Num>
              <Caret $w={18} $h={10} $color="#999" />
            </Pill>
            <Num $size={30} $weight={100} $color="#444" style={{ marginLeft: 11 }}>VVOL</Num>
            <Num $size={29} $weight={600} $color="#5a6270" $gap={-0.2}>:3177.00 </Num>
            <Num $size={30} $weight={100} $color={MAGENTA}>VOLUME</Num>
            <Num $size={29} $weight={600} $color={MAGENTA} $gap={-0.3}>:3177.00 </Num>
            <Num $size={30} $weight={100} $color="#4a9830">MA</Num>
            <Num $size={29} $weight={600} $color="#4a9830" $gap={-1}>5:5658.20</Num>
          </PaneHead>
          <Pane $h={278}>
            <TdxPlot />
            <PlotLabel $top={1} $color={SLATE} $light>220310.00</PlotLabel>
            <PlotLabel $top={251} $color={SLATE} $light>0.00</PlotLabel>
          </Pane>
          <TimeAxis><span>09:30</span><span>11:30</span><span>15:00</span></TimeAxis>
        </Left>

        <Right>
          <Promo><b>0</b>元领增强服务</Promo>
          <Sells><Book rows={SELLS} sell /></Sells>
          <Ratio />
          <Buys><Book rows={BUYS} /></Buys>
          <TicksTitle><Han $size={36} $gap={0.3}>分时成交</Han><Caret $w={18} $h={10} $color="#999" /></TicksTitle>
          <Ticks>
            {TICKS.map(([t, p, q, s], i) => (
              <TickRow key={i}>
                <Num $size={32} $gap={0.4}>{t}</Num>
                <Num $size={33} $color={DOWN} $gap={0}>{p}</Num>
                <Num $size={32} $color={isLarge(q) ? MAGENTA : undefined} $gap={0.3}><Amount>{q}</Amount></Num>
                <Side $buy={s === "B"}>{s}</Side>
              </TickRow>
            ))}
          </Ticks>
        </Right>
      </Main>

      <Footer>
        <IndexBox>
          <svg width="19" height="12"><path d="M9.500 1 18 10q0 1-1 1H2q-1 0-1-1z" fill="#999" stroke="#999" /></svg>
          <Num $size={39} $weight={400} $color={DOWN} $gap={-1} style={{ marginTop: 14 }}>13985.79</Num>
          <IndexLine><Han $size={31} $color={GREY}>深证</Han><Num $size={34} $weight={400} $color={DOWN} $gap={-0.5}>-1.20%</Num></IndexLine>
        </IndexBox>
        <Action><TradeIcon /><Han $size={30} $color="#c83838">交易</Han></Action>
        <Action><BellIcon /><Han $size={31} $color={GREY}>预警</Han></Action>
        <Action><MinusIcon /><Han $size={31} $color={GREY}>删自选</Han></Action>
        <Action><MoreIcon /><Han $size={31} $color={GREY}>更多</Han></Action>
      </Footer>

      <NavBar>
        <NavSlot $w={300}>
          <svg width="50" height="52" fill="none" stroke="#ececec" strokeWidth="2.500">
            <rect x="2.500" y="2" width="8" height="47" rx="4" />
            <rect x="20" y="2" width="8" height="47" rx="4" />
            <rect x="38" y="2" width="8" height="47" rx="4" />
          </svg>
        </NavSlot>
        <NavSlot $w={311}>
          <svg width="53" height="52" fill="none" stroke="#ececec" strokeWidth="2.500">
            <rect x="2" y="2" width="49" height="47.500" rx="17" />
            <rect x="9" y="8.500" width="35" height="34.500" rx="11" />
          </svg>
        </NavSlot>
        <NavSlot $w={60}>
          <svg width="40" height="54" fill="none" strokeLinecap="round" strokeLinejoin="round">
            <path d="M31.500 5 6 25.500 31.500 46.500" stroke="#ececec" strokeWidth="9.500" />
            <path d="M31.500 5 6 25.500 31.500 46.500" stroke="#fff" strokeWidth="4.800" />
          </svg>
        </NavSlot>
      </NavBar>
    </Screen>
  );
}
